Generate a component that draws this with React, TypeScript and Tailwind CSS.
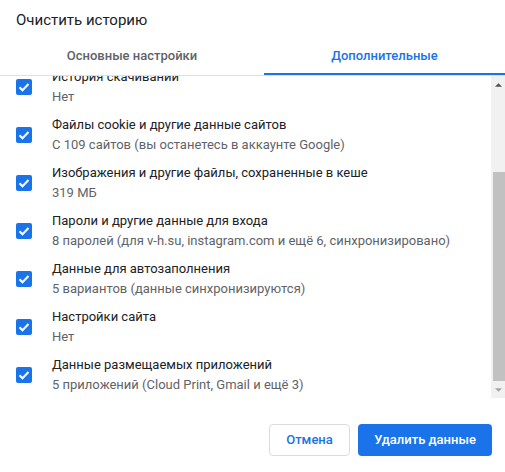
const items = [
  { title: 'История скачиваний', sub: 'Нет' },
  { title: 'Файлы cookie и другие данные сайтов', sub: 'С 109 сайтов (вы останетесь в аккаунте Google)' },
  { title: 'Изображения и другие файлы, сохраненные в кеше', sub: '319 МБ' },
  { title: 'Пароли и другие данные для входа', sub: '8 паролей (для v-h.su, instagram.com и ещё 6, синхронизировано)' },
  { title: 'Данные для автозаполнения', sub: '5 вариантов (данные синхронизируются)' },
  { title: 'Настройки сайта', sub: 'Нет' },
  { title: 'Данные размещаемых приложений', sub: '5 приложений (Cloud Print, Gmail и ещё 3)' },
];

function Checkbox() {
  return (
    <div className="w-4 h-4 rounded-[2px] bg-[#1a73e8] flex items-center justify-center shrink-0">
      <svg viewBox="0 0 16 16" className="w-4 h-4" fill="none">
        <path d="M3.5 8.2l3 3 6-6.2" stroke="white" strokeWidth="2" />
      </svg>
    </div>
  );
}

export default function App() {
  return (
    <div className="w-[505px] h-[472px] bg-white flex flex-col overflow-hidden font-['Roboto',sans-serif] text-[#202124]">
      <div className="h-9 px-4 flex items-center text-[15px] pt-[4px]">Очистить историю</div>

      <div className="h-10 flex border-b border-[#e0e0e0] text-[13px] font-medium">
        <div className="w-[264px] flex items-center justify-center text-[#5f6368]">Основные настройки</div>
        <div className="flex-1 relative flex items-center justify-center text-[#1a73e8]">
          Дополнительные
          <div className="absolute left-0 right-0 bottom-0 h-[2px] bg-[#1a73e8]" />
        </div>
      </div>

      <div className="h-[322px] flex">
        <div className="flex-1 overflow-hidden">
          <div className="-mt-[13px]">
            {items.map((it) => (
              <div key={it.title} className="flex items-center py-1">
                <div className="w-[52px] pl-4">
                  <Checkbox />
                </div>
                <div className="text-[13px] leading-5">
                  <div>{it.title}</div>
                  <div className="text-[#5f6368]">{it.sub}</div>
                </div>
              </div>
            ))}
          </div>
        </div>

        {/* scrollbar */}
        <div className="w-[14px] bg-[#f1f1f1] flex flex-col">
          <div className="h-[17px] flex items-center justify-center">
            <svg viewBox="0 0 8 4" className="w-[7px] h-[4px]">
              <path d="M0 4L4 0l4 4z" fill="#505050" />
            </svg>
          </div>
          <div className="h-[79px]" />
          <div className="h-[209px] ml-[2px] bg-[#c1c1c1]" />
          <div className="flex-1 flex items-center justify-center">
            <svg viewBox="0 0 8 4" className="w-[7px] h-[4px]">
              <path d="M0 0l4 4 4-4z" fill="#a3a3a3" />
            </svg>
          </div>
        </div>
      </div>

      <div className="flex justify-end gap-2 pt-[26px] pr-[13px] text-[13px] font-medium">
        <button className="h-8 w-[81px] rounded border border-[#dadce0] text-[#1a73e8] bg-white">Отмена</button>
        <button className="h-8 w-[134px] rounded bg-[#1a73e8] text-white">Удалить данные</button>
      </div>
    </div>
  );
}
